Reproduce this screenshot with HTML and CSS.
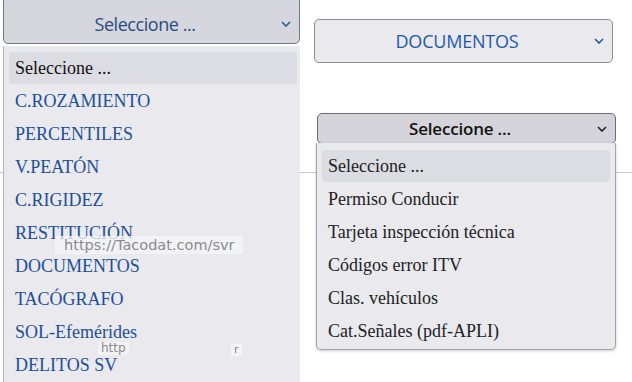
FILE: index.html
```html
<!DOCTYPE html>
<html lang="es">
<head>
    <meta charset="UTF-8">
    <meta name="viewport" content="width=device-width, initial-scale=1.0">
    <title>Tacodat</title>
    <link rel="stylesheet" href="styles.css">
</head>
<body>
    <div class="page">
        <div class="row">
            <div class="col-left">
                <div class="select select-main">
                    <span class="select-text">Seleccione ...</span>
                    <svg class="chev" width="10" height="6" viewBox="0 0 10 6"><path d="M1 1 L5 5 L9 1" fill="none" stroke="#2a5aa0" stroke-width="1.6"/></svg>
                </div>
                <ul class="dropdown dropdown-left">
                    <li class="opt active">Seleccione ...</li>
                    <li class="opt">C.ROZAMIENTO</li>
                    <li class="opt">PERCENTILES</li>
                    <li class="opt">V.PEATÓN</li>
                    <li class="opt">C.RIGIDEZ</li>
                    <li class="opt">RESTITUCIÓN</li>
                    <li class="opt">DOCUMENTOS</li>
                    <li class="opt">TACÓGRAFO</li>
                    <li class="opt">SOL-Efemérides</li>
                    <li class="opt">DELITOS SV</li>
                </ul>
                <div class="ghost ghost-url">https://Tacodat.com/svr</div>
                <div class="ghost ghost-small">http</div>
                <div class="ghost ghost-r">r</div>
            </div>
            <div class="col-right">
                <div class="select select-docs">
                    <span class="select-text">DOCUMENTOS</span>
                    <svg class="chev" width="10" height="6" viewBox="0 0 10 6"><path d="M1 1 L5 5 L9 1" fill="none" stroke="#1f4f95" stroke-width="1.5"/></svg>
                </div>
                <div class="sub-wrap">
                    <div class="select select-sub">
                        <span class="select-text">Seleccione ...</span>
                        <svg class="chev" width="10" height="6" viewBox="0 0 10 6"><path d="M1 1 L5 5 L9 1" fill="none" stroke="#222" stroke-width="1.6"/></svg>
                    </div>
                    <ul class="dropdown dropdown-right">
                        <li class="opt active">Seleccione ...</li>
                        <li class="opt">Permiso Conducir</li>
                        <li class="opt">Tarjeta inspección técnica</li>
                        <li class="opt">Códigos error ITV</li>
                        <li class="opt">Clas. vehículos</li>
                        <li class="opt">Cat.Señales (pdf-APLI)</li>
                    </ul>
                </div>
            </div>
        </div>
        <hr class="sep">
    </div>
</body>
</html>
```

FILE: styles.css
```css
body {
    margin: 0;
    padding: 0;
    background: #fff;
    font-family: "Open Sans", sans-serif;
    overflow: hidden;
}

.page {
    width: 632px;
    height: 382px;
    overflow: hidden;
}

.row {
    display: flex;
    align-items: flex-start;
}

.col-left {
    position: relative;
    width: 297px;
    margin-left: 3px;
    margin-top: -4px;
}

.col-right {
    display: flex;
    flex-direction: column;
    margin-left: 14px;
    margin-top: 19px;
    width: 300px;
}

.select {
    display: flex;
    align-items: center;
    justify-content: center;
    position: relative;
    box-sizing: border-box;
    border-radius: 5px;
}

.select-text {
    padding-right: 13px;
}

.chev {
    position: absolute;
    right: 8px;
    top: 50%;
    margin-top: -3px;
}

.select-main {
    height: 48px;
    padding-top: 7px;
    background: #d5d6de;
    border: 1px solid #77777f;
    color: #2b4c80;
    font-size: 18px;
    letter-spacing: -0.45px;
}

.select-main .chev {
    margin-top: 1px;
}

.select-docs {
    width: 299px;
    height: 44px;
    background: #e9e9ee;
    border: 1px solid #8c8c98;
    color: #1b5ab0;
    font-size: 18px;
    letter-spacing: -0.2px;
}

.sub-wrap {
    position: relative;
    margin-top: 50px;
    margin-left: 3px;
}

.select-sub {
    width: 299px;
    height: 31px;
    background: #d4d4da;
    border: 1px solid #6c6c74;
    color: #111;
    font-size: 17px;
    font-weight: 600;
    letter-spacing: -0.2px;
}

.dropdown {
    position: absolute;
    list-style: none;
    margin: 0;
    box-sizing: border-box;
    background: #e9e9ee;
    font-family: "Liberation Serif", "Times New Roman", serif;
    font-size: 18px;
    z-index: 2;
}

.dropdown .opt {
    height: 32px;
    line-height: 32px;
    margin-bottom: 1px;
    padding-left: 6px;
    border-radius: 3px;
}

.dropdown .opt.active {
    background: #dcdce3;
}

.dropdown-left {
    top: 50px;
    left: 0;
    width: 297px;
    height: 360px;
    padding: 6px 3px 0 5px;
    border-left: 1px solid #b4b4bc;
    color: #1d4f9a;
}

.dropdown-left .opt.active {
    color: #111;
}

.dropdown-right {
    top: 30px;
    left: -1px;
    width: 300px;
    height: 207px;
    padding: 7px 5px 0 5px;
    border: 1px solid #a2a2aa;
    border-top: none;
    border-radius: 0 0 5px 5px;
    box-shadow: 0 1px 3px rgba(0, 0, 0, 0.2);
    color: #222;
}

.ghost {
    position: absolute;
    z-index: 3;
    font-family: "DejaVu Sans", sans-serif;
    color: #8a8a8e;
    background: rgba(246, 246, 248, 0.75);
}

.ghost-url {
    top: 240px;
    left: 52px;
    width: 188px;
    height: 18px;
    line-height: 18px;
    padding-left: 9px;
    font-size: 14.5px;
    box-sizing: border-box;
}

.ghost-small {
    top: 346px;
    left: 95px;
    padding: 0 3px;
    font-size: 12px;
    line-height: 13px;
}

.ghost-r {
    top: 348px;
    left: 228px;
    padding: 0 3px;
    font-size: 11px;
    line-height: 12px;
}

.sep {
    position: relative;
    z-index: 1;
    margin: 0;
    margin-top: 28px;
    border: none;
    border-top: 1px solid #c8c8cc;
}
```
